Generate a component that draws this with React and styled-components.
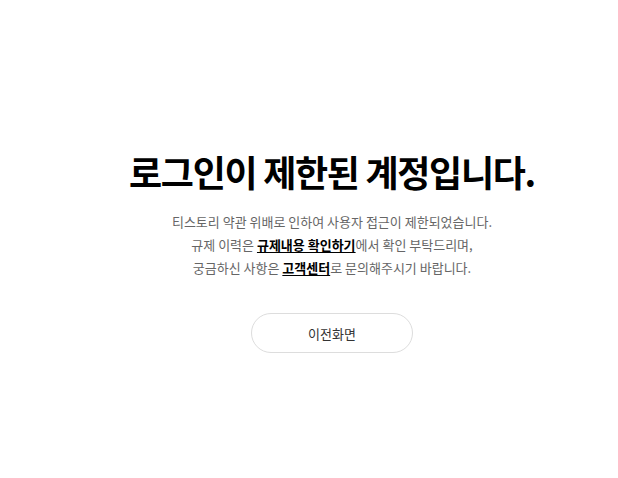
import React from "react";
import styled, { createGlobalStyle } from "styled-components";

const Global = createGlobalStyle`
  html, body { margin: 0; padding: 0; background: #fff; }
  body { font-family: "Noto Sans CJK KR", "Noto Sans", sans-serif; }
`;

const Page = styled.main`
  box-sizing: border-box;
  width: 618px;
  height: 478px;
  padding: 148px 0 0 46px;
  display: flex;
  flex-direction: column;
  align-items: center;
`;

const Title = styled.h1`
  margin: 0;
  font-size: 36px;
  font-weight: 700;
  line-height: 46px;
  letter-spacing: -1.3px;
  color: #000;
`;

const Desc = styled.p`
  margin: 16px 0 0;
  font-size: 13px;
  line-height: 23px;
  letter-spacing: 0;
  color: #666;
  text-align: center;
`;

const Link = styled.a`
  color: #000;
  font-weight: 700;
  text-decoration: underline;
  text-underline-offset: 2px;
`;

const Button = styled.button`
  margin-top: 34px;
  width: 162px;
  height: 40px;
  border: 1px solid #ddd;
  border-radius: 20px;
  background: #fff;
  font-family: inherit;
  font-size: 13px;
  color: #333;
  letter-spacing: 0;
`;

export default function App() {
  return (
    <>
      <Global />
      <Page>
        <Title>로그인이 제한된 계정입니다.</Title>
        <Desc>
          티스토리 약관 위배로 인하여 사용자 접근이 제한되었습니다.
          <br />
          규제 이력은 <Link>규제내용 확인하기</Link>에서 확인 부탁드리며,
          <br />
          궁금하신 사항은 <Link>고객센터</Link>로 문의해주시기 바랍니다.
        </Desc>
        <Button>이전화면</Button>
      </Page>
    </>
  );
}
